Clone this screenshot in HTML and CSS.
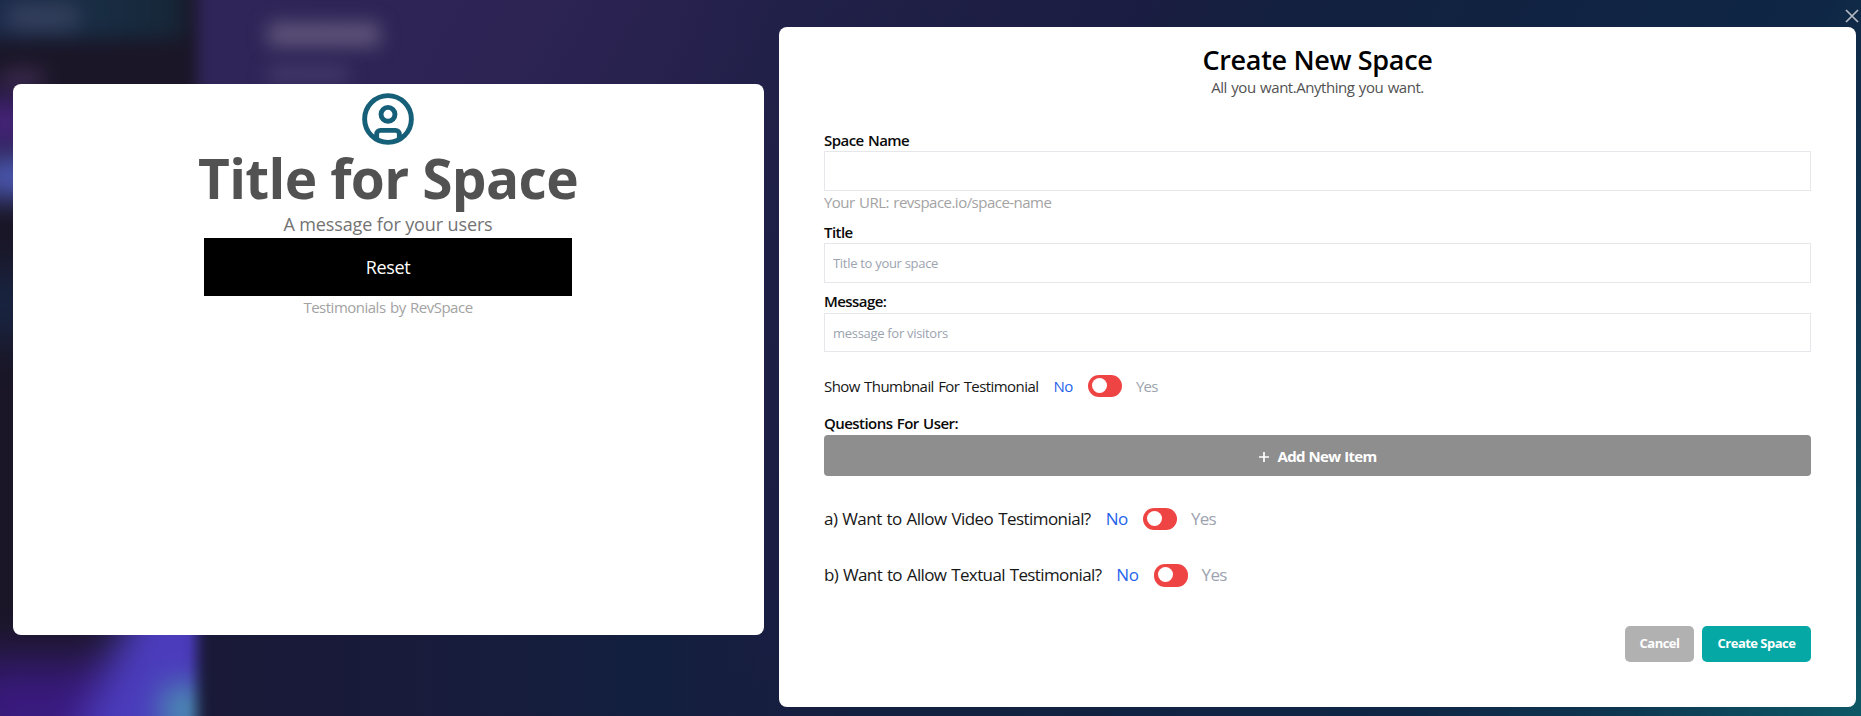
FILE: index.html
```html
<!DOCTYPE html>
<html lang="en">
<head>
<meta charset="utf-8">
<title>Create New Space</title>
<link rel="stylesheet" href="styles.css">
</head>
<body>
<div class="backdrop">
  <div class="sidebar">
    <i class="glow glow-nav"></i>
    <i class="glow glow-nav-text"></i>
    <i class="glow glow-item"></i>
    <i class="glow glow-purple"></i>
    <i class="glow glow-blue"></i>
    <i class="glow glow-navy"></i>
    <i class="glow glow-base"></i>
    <i class="glow glow-beam"></i>
    <i class="glow glow-teal"></i>
  </div>
  <i class="glow glow-heading"></i>
  <i class="glow glow-subheading"></i>
</div>
<svg class="close" viewBox="0 0 14 14" width="14" height="14"><path d="M1 1l12 12M13 1L1 13"/></svg>
<main class="stage">
  <section class="preview">
    <svg class="avatar" viewBox="0 0 24 24" width="62" height="62">
      <circle cx="12" cy="12" r="9.05"/>
      <circle cx="12" cy="10.2" r="2.7"/>
      <path d="M7.6 19.4V17.9a1.5 1.5 0 0 1 1.5-1.5h5.8a1.5 1.5 0 0 1 1.5 1.5V19.4"/>
    </svg>
    <h1 class="preview-title">Title for Space</h1>
    <p class="preview-message">A message for your users</p>
    <button class="reset">Reset</button>
    <p class="credit">Testimonials by RevSpace</p>
  </section>
  <section class="form">
    <h2 class="form-title">Create New Space</h2>
    <p class="form-subtitle">All you want.Anything you want.</p>
    <div class="field name-field">
      <label class="label">Space Name</label>
      <input class="input" type="text">
      <span class="hint">Your URL: revspace.io/space-name</span>
    </div>
    <div class="field title-field">
      <label class="label">Title</label>
      <input class="input" type="text" placeholder="Title to your space">
    </div>
    <div class="field message-field">
      <label class="label">Message:</label>
      <input class="input" type="text" placeholder="message for visitors">
    </div>
    <div class="choice thumbnail">
      <span class="question">Show Thumbnail For Testimonial</span><span class="no">No</span><span class="toggle"></span><span class="yes">Yes</span>
    </div>
    <div class="field questions">
      <label class="label">Questions For User:</label>
      <button class="add"><svg viewBox="0 0 10 10" width="10" height="10"><path d="M5 0v10M0 5h10"/></svg>Add New Item</button>
    </div>
    <div class="choice large video">
      <span class="question">a) Want to Allow Video Testimonial?</span><span class="no">No</span><span class="toggle"></span><span class="yes">Yes</span>
    </div>
    <div class="choice large textual">
      <span class="question">b) Want to Allow Textual Testimonial?</span><span class="no">No</span><span class="toggle"></span><span class="yes">Yes</span>
    </div>
    <div class="actions">
      <button class="btn cancel">Cancel</button>
      <button class="btn create">Create Space</button>
    </div>
  </section>
</main>
</body>
</html>
```
FILE: styles.css
```css
* { box-sizing: border-box; margin: 0; }
body { height: 716px; overflow: hidden; font-family: "Open Sans", "Noto Sans", sans-serif; position: relative; background: #1b1d40; }
button { border: 0; padding: 0; font-family: inherit; color: #fff; }
svg { display: block; fill: none; }

/* Blurred page behind the dialog */
.backdrop { position: absolute; inset: 0; overflow: hidden;
  background:
    linear-gradient(90deg, rgba(16,32,64,0) 640px, rgba(16,32,64,.2) 800px, rgba(16,32,64,0) 1100px),
    linear-gradient(120deg, #32265c 0%, #2d2454 23%, #211f47 40%, #1c1d42 49%, #13203f 57%, #0f2645 80%, #0e3550 89%, #0d5866 100%); }
.backdrop::before { content: ""; position: absolute; left: 190px; top: 600px; width: 620px; height: 116px; background: linear-gradient(90deg, #191937, #191b3b 35%, #121f3e 75%, rgba(16,33,63,0)); }
.sidebar { position: absolute; left: -20px; top: -20px; width: 217px; height: 756px; background: #1a1627; overflow: hidden; filter: blur(7px); }
.glow { position: absolute; display: block; }
.glow-nav { left: 0; top: 0; width: 204px; height: 59px; background: linear-gradient(90deg, #1d2b4c, #182c42 60%, #162637); filter: blur(7px); }
.glow-nav-text { left: 28px; top: 25px; width: 70px; height: 24px; background: #36415f; filter: blur(8px); }
.glow-item { left: 22px; top: 88px; width: 42px; height: 20px; background: #3a2b4a; filter: blur(8px); }
.glow-purple { left: 0; top: 118px; width: 50px; height: 50px; background: #4c2688; filter: blur(15px); }
.glow-blue { left: 0; top: 176px; width: 60px; height: 42px; background: #4c59b4; filter: blur(12px); }
.glow-navy { left: 0; top: 290px; width: 50px; height: 70px; background: #182848; filter: blur(20px); }
.glow-base { left: -20px; top: 680px; width: 190px; height: 110px; background: #3a1a80; filter: blur(25px); }
.glow-beam { left: 126px; top: 590px; width: 130px; height: 230px; background: #4b3cbc; filter: blur(17px); transform: rotate(24deg); }
.glow-teal { left: 182px; top: 706px; width: 50px; height: 50px; background: #4b8fb2; filter: blur(14px); }
.glow-heading { left: 268px; top: 22px; width: 112px; height: 25px; background: #5c5278; filter: blur(9px); }
.glow-subheading { left: 268px; top: 66px; width: 80px; height: 16px; background: #453a6a; filter: blur(9px); }
.close { position: absolute; left: 1845px; top: 9px; }
.close path { stroke: #b4bac4; stroke-width: 1.7; }

.stage { position: relative; height: 716px; padding: 27px 5px 9px 13px; display: flex; align-items: flex-start; justify-content: space-between; }
.preview { width: 751px; height: 551px; margin-top: 57px; padding: 4px 1px 0 0; background: #fff; border-radius: 8px; display: flex; flex-direction: column; align-items: center; }
.avatar { stroke: #165f78; stroke-width: 1.9; }
.preview-title { font-size: 55px; font-weight: 700; line-height: 56px; letter-spacing: -.65px; color: #525252; margin-bottom: 4px; white-space: nowrap; }
.preview-message { font-size: 18px; line-height: 28px; letter-spacing: -.12px; color: #737373; }
.reset { width: 368px; height: 58px; background: #000; font-size: 18px; letter-spacing: -.35px; }
.credit { font-size: 15px; line-height: 22px; letter-spacing: -.5px; word-spacing: 1px; color: #a3a3a3; }

.form { width: 1077px; height: 680px; padding: 15px 45px 0; background: #fff; border-radius: 8px; display: flex; flex-direction: column; }
.form-title { text-align: center; font-size: 27px; font-weight: 600; line-height: 36px; letter-spacing: -.33px; color: #000; }
.form-subtitle { text-align: center; font-size: 15px; line-height: 18px; letter-spacing: -.46px; word-spacing: 1px; color: #525252; }
.field { display: flex; flex-direction: column; }
.label { font-size: 15px; font-weight: 600; line-height: 22px; letter-spacing: -.55px; word-spacing: 1px; color: #0a0a0a; }
.input { height: 40px; width: 100%; border: 1px solid #e5e7eb; padding: 0 8px; background: #fff; font: 13px "Open Sans", sans-serif; letter-spacing: -.3px; outline: 0; }
.input::placeholder { color: #9ca3af; opacity: 1; }
.hint { font-size: 15px; line-height: 22px; letter-spacing: -.52px; word-spacing: 1px; color: #a3a3a3; }
.name-field { margin-top: 33px; }
.title-field { margin-top: 8px; }
.message-field { margin-top: 8px; }
.message-field .label { line-height: 21px; padding-bottom: 1px; }
.message-field .input { height: 39px; }
.choice { display: flex; align-items: center; gap: 15px; height: 22px; font-size: 15px; line-height: 22px; color: #171717; white-space: nowrap; }
.question { letter-spacing: -.57px; word-spacing: 1px; }
.thumbnail { margin-top: 23px; }
.no { color: #2563eb; letter-spacing: -.4px; }
.yes { color: #9ca3af; letter-spacing: -.7px; margin-left: -1px; }
.toggle { width: 34px; height: 22px; border-radius: 11px; background: #ef4444; padding: 3px 0 0 4px; }
.toggle::before { content: ""; display: block; width: 15px; height: 15px; border-radius: 50%; background: #fff; }
.questions { margin-top: 16px; }
.questions .label { line-height: 20px; padding-bottom: 2px; }
.add { height: 41px; border-radius: 4px; background: #8e8e8e; display: flex; align-items: center; justify-content: center; gap: 9px; font-size: 15px; font-weight: 700; letter-spacing: -.7px; word-spacing: .6px; }
.add svg { stroke: #fff; stroke-width: 1.7; margin-top: 2px; }
.large { font-size: 17px; }
.video { margin-top: 32px; }
.video .question { letter-spacing: -.55px; }
.textual { margin-top: 34px; }
.textual .question { letter-spacing: -.62px; }
.textual .toggle { height: 23px; }
.actions { display: flex; justify-content: flex-end; gap: 8px; margin-top: 40px; }
.btn { height: 36px; border-radius: 5px; padding-bottom: 2px; font-size: 13px; font-weight: 700; letter-spacing: -.52px; }
.cancel { width: 69px; background: #b1b1b1; }
.create { width: 109px; background: #05a8a5; }
```
